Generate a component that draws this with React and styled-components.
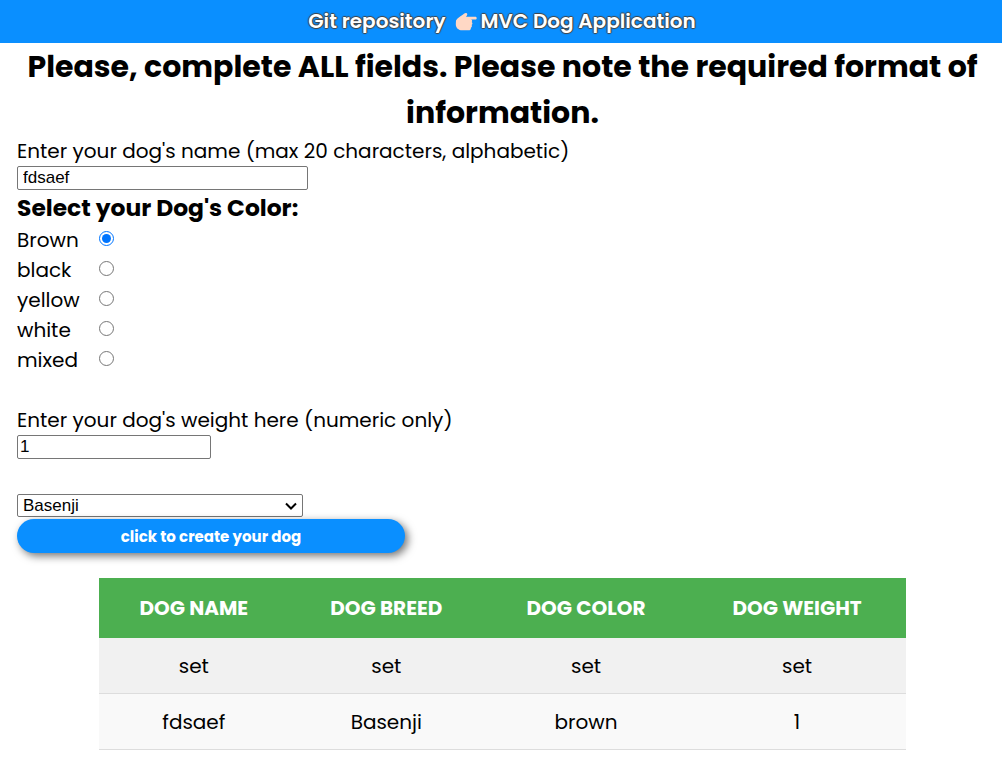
import React, { useState } from "react";
import styled, { createGlobalStyle } from "styled-components";

const GlobalStyle = createGlobalStyle`
  *, *::before, *::after { box-sizing: border-box; margin: 0; padding: 0; }
  body {
    background: #fff;
    color: #000;
    font-family: Poppins, Inter, sans-serif;
    font-size: 20px;
    line-height: 30px;
  }
`;

const NavBar = styled.nav`
  display: flex;
  justify-content: center;
  align-items: center;
  height: 43px;
  padding: 0 0 1px 2px;
  background: #0a8fff;
`;

const NavLink = styled.a`
  display: flex;
  align-items: center;
  color: #fff;
  font-size: 20px;
  font-weight: 600;
  text-decoration: none;
  text-shadow: 1px 0 1px #444, -1px 0 1px #444, 0 1px 1px #444, 0 -1px 1px #444;
`;

const PointingHand = styled.svg`
  width: 22px;
  height: 20px;
  margin: 2px 4px 0 9px;
`;

const Main = styled.main`
  padding: 1px 14px 8px 17px;
`;

const Title = styled.h1`
  font-size: 30px;
  font-weight: 700;
  line-height: 46px;
  text-align: center;
`;

const Form = styled.form`
  display: flex;
  flex-direction: column;
  align-items: flex-start;
`;

const Field = styled.div`
  display: flex;
  flex-direction: column;
  align-items: flex-start;
  margin-bottom: ${(p) => p.$gap}px;
`;

const TextBox = styled.input`
  width: ${(p) => p.$width}px;
  max-width: 100%;
  height: 24px;
  padding: 0 ${(p) => p.$inset}px;
  border: 1px solid #767676;
  border-radius: 2px;
  background: #fff;
  color: #000;
  font: 17px "Liberation Sans", Arial, sans-serif;
`;

const ColorGroup = styled.fieldset`
  border: 0;
  margin-bottom: 30px;
`;

const ColorLegend = styled.legend`
  margin-bottom: 2px;
`;

const ColorRow = styled.label`
  display: grid;
  grid-template-columns: 82px 15px;
  align-items: center;
  height: 30px;
`;

const Radio = styled.input`
  width: 15px;
  height: 15px;
  margin-bottom: 3px;
  accent-color: #0075ff;
`;

const SelectBox = styled.div`
  display: grid;
  align-items: center;
  width: 286px;
  max-width: 100%;
  height: 23px;
`;

const BreedSelect = styled.select`
  grid-area: 1 / 1;
  width: 100%;
  height: 23px;
  padding: 0 24px 0 5px;
  appearance: none;
  border: 1px solid #767676;
  border-radius: 2px;
  background: #fff;
  color: #000;
  font: 17px "Liberation Sans", Arial, sans-serif;
`;

const Chevron = styled.svg`
  grid-area: 1 / 1;
  justify-self: end;
  width: 12px;
  height: 8px;
  margin-right: 6px;
  pointer-events: none;
`;

const CreateButton = styled.button`
  width: 388px;
  max-width: 100%;
  height: 34px;
  margin-top: 2px;
  border: 0;
  border-radius: 17px;
  background: #0a8fff;
  box-shadow: 3px 3px 8px rgba(0, 0, 0, 0.55);
  color: #fff;
  font-family: inherit;
  font-size: 15px;
  font-weight: 700;
  cursor: pointer;
`;

const TableArea = styled.section`
  padding: 25px 82px 0;
`;

const DogTable = styled.table`
  width: 100%;
  border-spacing: 0;
  table-layout: fixed;
  text-align: center;
`;

const HeadCell = styled.th`
  width: ${(p) => p.$width};
  height: 60px;
  background: #4caf50;
  color: #fff;
  font-size: 20px;
  font-weight: 700;
  text-transform: uppercase;
`;

const DogRow = styled.tr`
  background: #f9f9f9;

  &:nth-child(odd) {
    background: #f1f1f1;
  }
`;

const DogCell = styled.td`
  height: 56px;
  border-bottom: 1px solid #ddd;
`;

const columns = [
  { name: "Dog name", width: "23.5%" },
  { name: "Dog breed", width: "24.2%" },
  { name: "Dog color", width: "25.3%" },
  { name: "Dog weight", width: "27%" },
];

const dogs = [
  ["set", "set", "set", "set"],
  ["fdsaef", "Basenji", "brown", "1"],
];

const colors = ["Brown", "black", "yellow", "white", "mixed"];

export default function App() {
  const [name, setName] = useState("fdsaef");
  const [weight, setWeight] = useState("1");
  const [color, setColor] = useState("Brown");

  return (
    <>
      <GlobalStyle />
      <NavBar>
        <NavLink href="#repository">
          <span>Git repository</span>
          <PointingHand viewBox="0 0 22 20" aria-hidden="true">
            <path
              fill="#ffd8c5"
              d="M1 8.5C2.5 6 5 4.5 7 3.2 8.5 2.2 9.5 1 10.8 1c1.4 0 1.9 1.3 1.1 2.4L11 4.8h9.2c2 0 2 2.7 0 2.7H16c1.3.5 1.5 1.7.7 2.6 1 .7 1 2.2-.1 2.9.7.9.3 2.2-.7 2.7.1 1.6-.8 2.6-2.1 2.6H7.2C3.5 18.3.8 16 .8 12z"
            />
          </PointingHand>
          <span>MVC Dog Application</span>
        </NavLink>
      </NavBar>
      <Main>
        <Title>
          Please, complete ALL fields. Please note the required format of
          information.
        </Title>
        <Form onSubmit={(e) => e.preventDefault()}>
          <Field $gap={3}>
            <label htmlFor="dog-name">
              Enter your dog's name (max 20 characters, alphabetic)
            </label>
            <TextBox
              id="dog-name"
              type="text"
              maxLength={20}
              $width={291}
              $inset={5}
              value={name}
              onChange={(e) => setName(e.target.value)}
            />
          </Field>
          <ColorGroup>
            <ColorLegend>
              <h3>Select your Dog's Color:</h3>
            </ColorLegend>
            {colors.map((c) => (
              <ColorRow key={c}>
                {c}
                <Radio
                  type="radio"
                  name="color"
                  value={c}
                  checked={color === c}
                  onChange={() => setColor(c)}
                />
              </ColorRow>
            ))}
          </ColorGroup>
          <Field $gap={35}>
            <label htmlFor="dog-weight">
              Enter your dog's weight here (numeric only)
            </label>
            <TextBox
              id="dog-weight"
              type="text"
              inputMode="numeric"
              $width={194}
              $inset={2}
              value={weight}
              onChange={(e) => setWeight(e.target.value)}
            />
          </Field>
          <SelectBox>
            <BreedSelect aria-label="Dog breed" defaultValue="Basenji">
              <option>Basenji</option>
            </BreedSelect>
            <Chevron viewBox="0 0 12 8" aria-hidden="true">
              <path
                d="M1 1.5l5 5 5-5"
                fill="none"
                stroke="#000"
                strokeWidth="2"
              />
            </Chevron>
          </SelectBox>
          <CreateButton type="submit">click to create your dog</CreateButton>
        </Form>
        <TableArea>
          <DogTable>
            <thead>
              <tr>
                {columns.map((c) => (
                  <HeadCell key={c.name} scope="col" $width={c.width}>
                    {c.name}
                  </HeadCell>
                ))}
              </tr>
            </thead>
            <tbody>
              {dogs.map((dog) => (
                <DogRow key={dog[0]}>
                  {dog.map((value, i) => (
                    <DogCell key={columns[i].name}>{value}</DogCell>
                  ))}
                </DogRow>
              ))}
            </tbody>
          </DogTable>
        </TableArea>
      </Main>
    </>
  );
}
